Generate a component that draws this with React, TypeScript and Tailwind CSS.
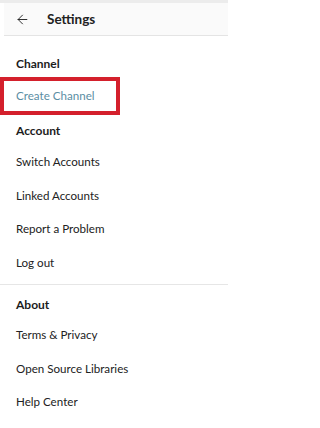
import { ArrowLeft } from "lucide-react";

const font = { fontFamily: 'Lato, "Open Sans", sans-serif' };

function Item({ label }: { label: string }) {
  return <div className="h-[33.5px] flex items-center pl-4 text-[11.6px] text-[#222]">{label}</div>;
}

export default function App() {
  return (
    <div className="w-[228px] h-[428px] bg-white overflow-hidden" style={font}>
      <div className="h-[3px] bg-[#ececec]" />
      <div className="h-[33px] bg-[#fafafa] border-b border-[#e4e4e4] flex items-center ml-[4px]">
        <ArrowLeft className="w-[15px] h-[15px] ml-[11px] text-[#222]" strokeWidth={1.5} />
        <span className="ml-[17px] text-[13.5px] font-bold text-[#222]">Settings</span>
      </div>
      <div className="h-[41px] pt-[20px] pl-4 text-[12px] leading-[16px] font-bold text-[#1c1c1c]">Channel</div>
      <div className="w-[120px] h-[38px] border-[4px] border-[#d4202c] flex items-center pl-3 text-[11.6px] text-[#5b8ea3]">
        Create Channel
      </div>
      <div className="h-[30px] pt-[8px] pl-4 text-[12px] leading-[16px] font-bold text-[#1c1c1c]">Account</div>
      <Item label="Switch Accounts" />
      <Item label="Linked Accounts" />
      <Item label="Report a Problem" />
      <Item label="Log out" />
      <div className="h-[6px] border-b border-[#e6e6e6]" />
      <div className="h-[33px] pt-[12px] pl-4 text-[12px] leading-[16px] font-bold text-[#1c1c1c]">About</div>
      <Item label="Terms & Privacy" />
      <Item label="Open Source Libraries" />
      <Item label="Help Center" />
    </div>
  );
}
